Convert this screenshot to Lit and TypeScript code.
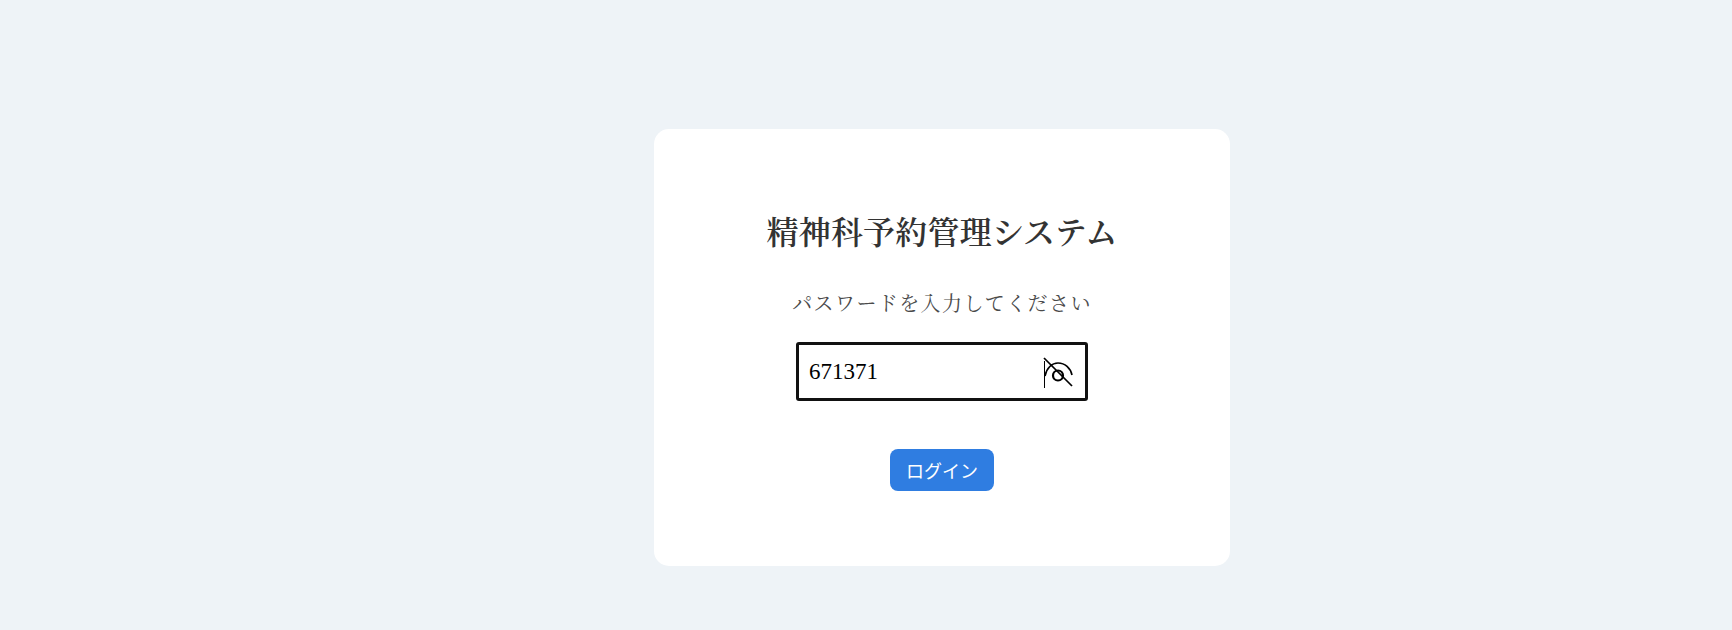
import { LitElement, html, css } from "lit";
import { customElement } from "lit/decorators.js";

@customElement("app-root")
export class AppRoot extends LitElement {
  static styles = css`
    :host {
      display: flex;
      justify-content: center;
      box-sizing: border-box;
      min-height: 630px;
      padding-left: 152px;
      background: #eef3f7;
      font-family: "Liberation Serif", "Noto Serif CJK JP", serif;
    }
    .card {
      box-sizing: border-box;
      width: 576px;
      height: 437px;
      margin-top: 129px;
      padding-top: 83px;
      background: #fff;
      border-radius: 15px;
      display: flex;
      flex-direction: column;
      align-items: center;
    }
    h1 {
      margin: 0;
      font-size: 32px;
      line-height: 42px;
      font-weight: 600;
      letter-spacing: 0.2px;
      color: #333;
    }
    p {
      margin: 36px 0 0;
      font-size: 20px;
      line-height: 28px;
      letter-spacing: 1.4px;
      color: #4a4a4a;
    }
    .field {
      box-sizing: border-box;
      width: 292px;
      height: 59px;
      margin-top: 24px;
      padding: 0 9px 0 10px;
      border: 3px solid #111;
      border-radius: 3px;
      display: flex;
      align-items: center;
      justify-content: space-between;
    }
    .value {
      font-size: 23px;
      color: #000;
    }
    svg {
      display: block;
      width: 40px;
      height: 40px;
    }
    button {
      width: 104px;
      height: 42px;
      margin-top: 48px;
      border: 0;
      border-radius: 8px;
      background: #2f7de1;
      color: #fff;
      font-family: "Noto Sans CJK JP", sans-serif;
      font-size: 18px;
    }
  `;

  render() {
    return html`
      <div class="card" lang="ja">
        <h1>精神科予約管理システム</h1>
        <p>パスワードを入力してください</p>
        <div class="field">
          <span class="value">671371</span>
          <svg viewBox="0 0 40 40" fill="none" stroke="#000" stroke-width="1.7">
            <path d="M8 6 L36 34" />
            <path d="M8.5 9 V36" stroke-width="1" />
            <path d="M9 24 C10.5 16 16 11 22 11 C29 11 34.5 16 36 23" />
            <circle cx="22" cy="23.5" r="5" stroke-width="2.2" />
          </svg>
        </div>
        <button>ログイン</button>
      </div>
    `;
  }
}
